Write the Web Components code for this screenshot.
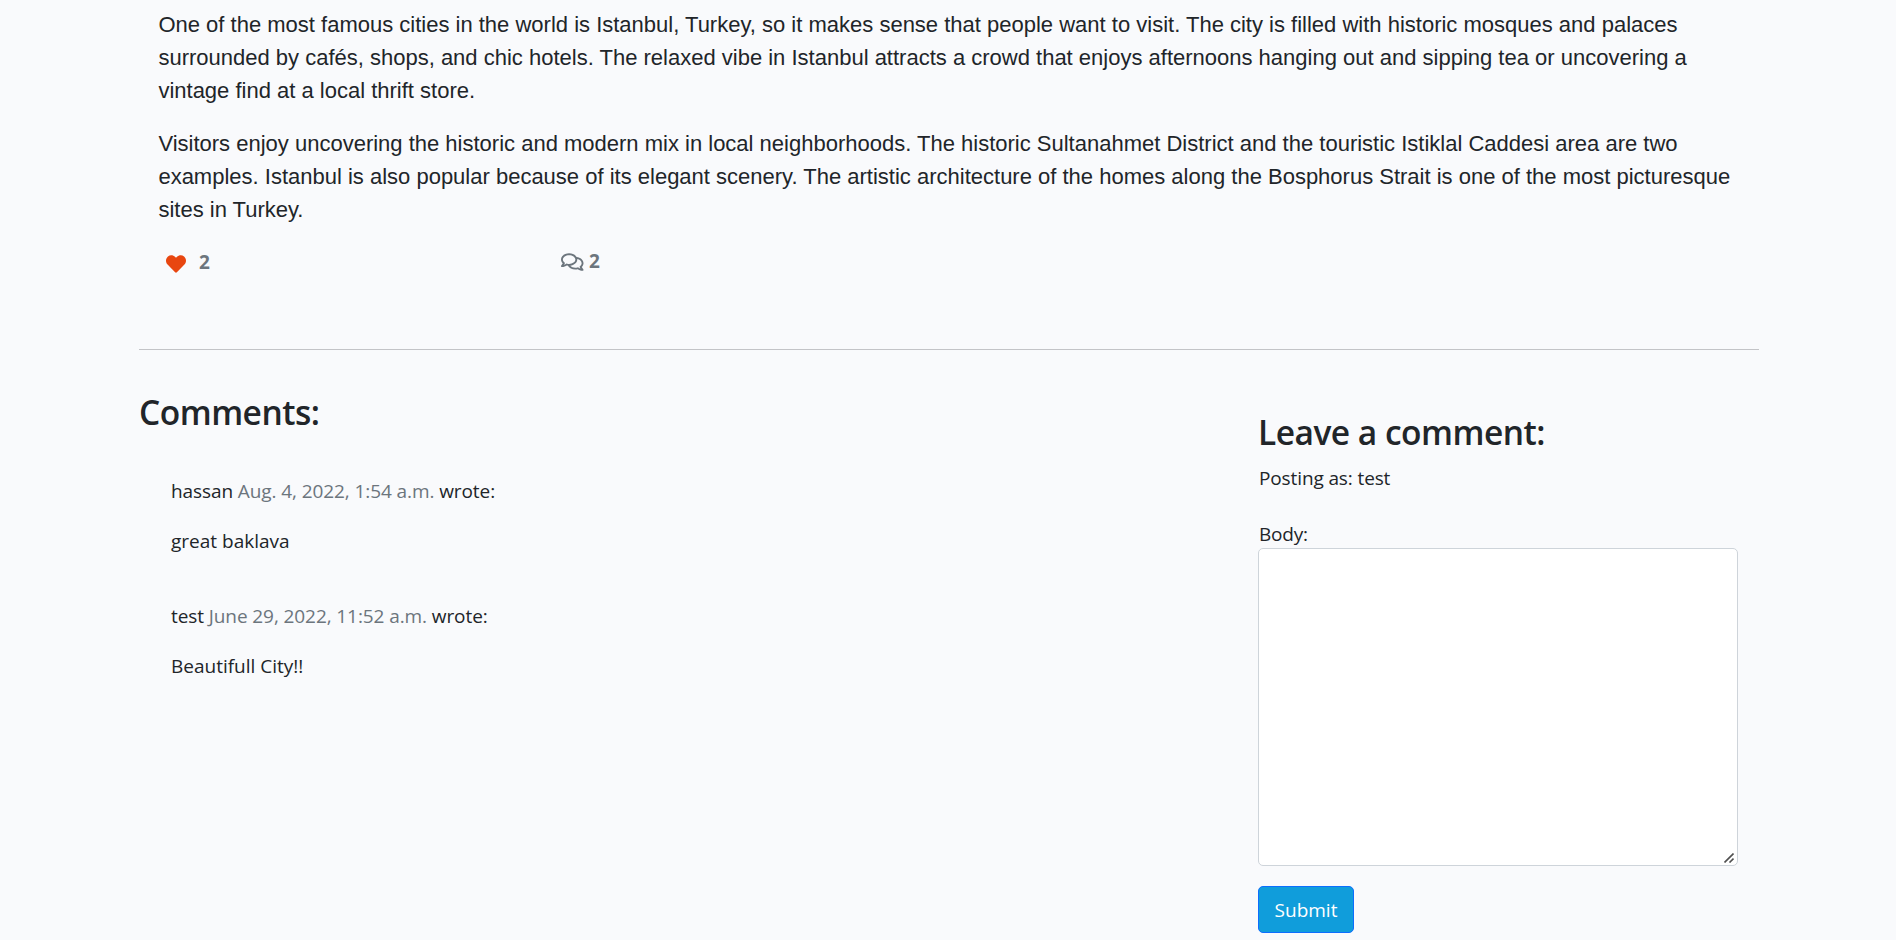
<!DOCTYPE html>
<html lang="en"><head><meta charset="utf-8"><title>Istanbul</title>
<style>
body{margin:0;background:#f9fafc;color:#212529;font:19px/30px "Open Sans","Noto Sans",sans-serif;height:940px;overflow:hidden}
</style></head><body>
<blog-page></blog-page>
<script>
const define=(name,html)=>customElements.define(name,class extends HTMLElement{
 constructor(){super();this.attachShadow({mode:'open'}).innerHTML=html}});

define('post-article',`<style>
:host{display:block;padding:8px 20px 0 19.4px;font:22px/33px "Liberation Sans",Arial,sans-serif}
::slotted(p){margin:0 0 20px!important}
</style><slot></slot>`);

define('like-count',`<style>
:host{display:flex;color:#6c757d;font-weight:700;line-height:32px}
svg{display:block;fill:#e84610;margin:7.5px 13px 0 7.5px}
</style><svg width="20" height="20" viewBox="0 0 512 512"><path d="M462.3 62.6C407.5 15.9 326 24.3 275.7 76.2L256 96.5l-19.7-20.3C186.1 24.3 104.5 15.9 49.7 62.6c-62.8 53.6-66.1 149.8-9.9 207.9l193.5 199.8c12.5 12.9 32.8 12.9 45.3 0l193.5-199.8c56.3-58.1 53-154.3-9.8-207.9z"/></svg><slot></slot>`);

define('comment-count',`<style>
:host{display:flex;color:#6c757d;font-weight:700;line-height:32px;margin-top:-1px}
svg{display:block;fill:currentColor;margin:6.5px 5.5px 0 0}
</style><svg width="22.5" height="20" viewBox="0 0 576 512"><path d="M532 386.2c27.5-27.1 44-61.1 44-98.2 0-80-76.5-146.1-176.2-157.9C368.3 72.5 294.3 32 208 32 93.1 32 0 103.6 0 192c0 37 16.5 71 44 98.2-15.3 30.7-37.3 54.5-37.7 54.9-6.3 6.7-8.1 16.5-4.4 25 3.6 8.5 12 14 21.2 14 53.5 0 96.7-20.2 125.2-38.8 9.2 2.1 18.7 3.7 28.4 4.9C208.1 407.6 281.8 448 368 448c20.8 0 40.8-2.4 59.8-6.8C456.3 459.7 499.4 480 553 480c9.2 0 17.5-5.5 21.2-14 3.6-8.5 1.9-18.3-4.4-25-.4-.3-22.5-24.1-37.8-54.8zm-392.8-92.3L122.1 305c-14.1 9.1-28.5 16.3-43.1 21.4 2.7-4.7 5.4-9.7 8-14.8l15.5-31.1L77.7 256C64.2 242.6 48 220.7 48 192c0-60.7 73.3-112 160-112s160 51.3 160 112-73.3 112-160 112c-16.5 0-33-1.9-49-5.6l-19.8-4.5zM498.3 352l-24.7 24.4 15.5 31.1c2.6 5.1 5.3 10.1 8 14.8-14.6-5.1-29-12.3-43.1-21.4l-17.1-11.1-19.9 4.6c-16 3.7-32.5 5.6-49 5.6-54 0-102.2-20.1-131.3-49.7C338 339.5 416 272.9 416 192c0-3.4-.4-6.7-.7-10C479.7 196.5 528 238.8 528 288c0 28.7-16.2 50.6-29.7 64z"/></svg><slot></slot>`);

define('section-title',`<style>
:host{display:block}
h3{margin:0;font-size:33.5px;line-height:42px;font-weight:600;white-space:nowrap;letter-spacing:-.5px}
</style><h3><slot></slot></h3>`);

define('user-comment',`<style>
:host{display:block;height:80px;padding-left:32px;margin-bottom:45px;white-space:nowrap}
p{margin:0 0 20px}
.meta{letter-spacing:-.09px}
.date{color:#6c757d}
</style><p class="meta"><slot name="author"></slot> <span class="date"><slot name="date"></slot></span> wrote:</p><p><slot></slot></p>`);

define('comment-form',`<style>
:host{display:block;width:480px}
p{margin:0}
.as{padding:10px 0 26px 1px;letter-spacing:-.12px}
label{display:block;height:29px;padding-left:1px;letter-spacing:-.2px}
.field{position:relative;height:318px}
textarea{display:block;box-sizing:border-box;width:480px;height:318px;margin:0;border:1px solid #ced4da;border-radius:5px;background:#fff;resize:none;outline:0;font:inherit}
.grip{position:absolute;right:4px;bottom:3px}
button{display:block;box-sizing:border-box;width:96px;height:47px;margin:20px 0 0;padding:0;border:1px solid #0d6efd;border-radius:5px;background:#109ddb;color:#fff;font:inherit}
</style><section-title><slot></slot></section-title>
<p class="as">Posting as: test</p>
<label for="body">Body:</label>
<div class="field"><textarea id="body"></textarea><svg class="grip" width="10" height="10" viewBox="0 0 10 10" stroke="#505050" stroke-width="1.6"><path d="M.5 9.5l9-9M5.5 9.5l4-4"/></svg></div>
<button>Submit</button>`);

define('blog-page',`<style>
:host{display:block;width:1620px;margin:0 auto 0 139px}
p{margin:0}
.stats{display:flex;height:103px;padding-left:19.5px}
like-count{width:402.5px}
hr{margin:0;border:0;height:1px;background:#c3c4c7}
.columns{display:grid;grid-template-columns:1119px 480px}
.comments{padding-top:41px}
.comments section-title{margin-bottom:43px}
comment-form{padding-top:61px}
</style>
<post-article><p>One of the most famous cities in the world is Istanbul, Turkey, so it makes sense that people want to visit. The city is filled with historic mosques and palaces surrounded by cafés, shops, and chic hotels. The relaxed vibe in Istanbul attracts a crowd that enjoys afternoons hanging out and sipping tea or uncovering a vintage find at a local thrift store.</p><p>Visitors enjoy uncovering the historic and modern mix in local neighborhoods. The historic Sultanahmet District and the touristic Istiklal Caddesi area are two examples. Istanbul is also popular because of its elegant scenery. The artistic architecture of the homes along the Bosphorus Strait is one of the most picturesque sites in Turkey.</p></post-article>
<div class="stats"><like-count>2</like-count><comment-count>2</comment-count></div>
<hr>
<div class="columns">
<div class="comments"><section-title>Comments:</section-title>
<user-comment><span slot="author">hassan</span><span slot="date">Aug. 4, 2022, 1:54 a.m.</span>great baklava</user-comment>
<user-comment><span slot="author">test</span><span slot="date">June 29, 2022, 11:52 a.m.</span>Beautifull City!!</user-comment>
</div>
<comment-form>Leave a comment:</comment-form>
</div>`);
</script></body></html>
